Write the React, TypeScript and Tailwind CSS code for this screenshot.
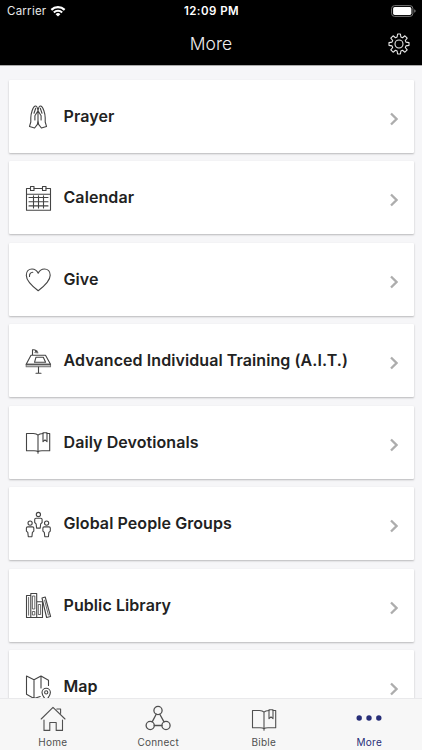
import type { ReactNode } from "react";

function Icon({ children, className = "" }: { children: ReactNode; className?: string }) {
  return (
    <svg viewBox="0 0 30 30" className={`h-[30px] w-[30px] shrink-0 ${className}`} fill="none" stroke="currentColor" strokeWidth="1.1" strokeLinejoin="round" strokeLinecap="round">
      {children}
    </svg>
  );
}

const Prayer = () => (
  <Icon>
    <path transform="translate(0 1)" d="M15 8.8C14.6 6 13.7 3.8 12.2 4C9.8 4.8 7.8 11.8 7.8 15.8V20L6.5 24.4L11.6 26L14.4 22.3L15 18.5V8.8L11.9 13.8V18M15 8.8C15.4 6 16.3 3.8 17.8 4C20.2 4.8 22.2 11.8 22.2 15.8V20L23.5 24.4L18.4 26L15.6 22.3L15 18.5M15 8.8L18.1 13.8V18M12.7 6.3L11 11.2M17.3 6.3L19 11.2" />
  </Icon>
);
const CalendarIcon = () => (
  <Icon>
    <path d="M7 5.5H3.5V27.3H27.5V5.5H23M11 5.5H19M3.5 11.2H27.5M6 14.5H25M6 18.7H25M6 22.9H25M10.5 12.8V25M15.5 12.8V25M20.5 12.8V25" />
    <path d="M7.5 3.5H11V7.5H7.5ZM19.5 3.5H23V7.5H19.5Z" />
  </Icon>
);
const Heart = () => (
  <Icon>
    <path d="M15.2 26.7C11 23.5 3.3 17.4 3.3 11.2C3.3 7.5 5.7 5 9 5C11.8 5 14 6.7 15.2 9.2C16.4 6.7 18.6 5 21.4 5C24.8 5 27.2 7.5 27.2 11.2C27.2 17.4 19.4 23.5 15.2 26.7Z" />
    <path d="M6.5 12.5C6.3 9.8 7.7 8.3 9.8 8.2" />
  </Icon>
);
const Podium = () => (
  <Icon>
    <path d="M3.2 18.2H27.5V20.8H3.2Z" fill="#bbb" stroke="#777" />
    <path d="M8 9.3H22.5L27.5 18.2H3.2ZM9.5 9V3.8Q12.8 3.4 13 5.5M15.5 21V27.3M13 27.3H18" />
    <path d="M11.8 6.3L13.8 4.3L15 6.8Z" fill="currentColor" strokeWidth=".5" />
    <path d="M13 11.2H20.3L22.6 16.3H11.5Z" />
  </Icon>
);
const Book = () => (
  <Icon>
    <g transform="translate(0 1.2)">
      <path d="M15 7C13.8 5.6 12.5 5.3 10.5 5.3H3.5V22.5H11C13 22.5 14.2 22.5 15 23.7C15.8 22.5 17 22.5 19 22.5H26.7V5.3H24M15 7C16.2 5.6 17.5 5.3 20 5.3M15 7V25" />
      <path d="M20 4.5H24V13.5L22 11.6L20 13.5Z" />
    </g>
  </Icon>
);
function Person({ x, y }: { x: number; y: number }) {
  return (
    <g transform={`translate(${x} ${y})`}>
      <circle cx="0" cy="0" r="2.1" />
      <path d="M-2.4 3.8H2.4Q3.7 3.8 3.7 5V8L2.3 9.3L1.8 13.6H-1.8L-2.3 9.3L-3.7 8V5Q-3.7 3.8-2.4 3.8Z" />
    </g>
  );
}
const People = () => (
  <Icon>
    <Person x={15.4} y={5.5} />
    <Person x={7.1} y={14.1} />
    <Person x={23.6} y={14.1} />
  </Icon>
);
const Library = () => (
  <Icon>
    <path d="M3.5 5.5H7.8V27.5H3.5ZM7.8 3.5H13.7V27.5H7.8ZM13.7 11.8H19.5V27.5H13.7ZM19 8L22.2 7L27.6 26.5L23.6 27.5Z" />
    <path d="M5.6 7.5V25.2M9.8 6H11.8V19H9.8ZM9.8 21.5H11.8V25H9.8ZM15.7 14.5H17.6V24.5H15.7ZM21.6 10.2L25.4 25" strokeWidth=".8" />
  </Icon>
);
const MapIcon = () => (
  <Icon>
    <path d="M17.2 24.5L11 26.5L3.5 22.3V4L11 7.8L18 4L25.5 8.3V13.5M11 7.8V26.3M18 4V16" />
    <path d="M23.2 28.4C21.3 25.7 19 23.6 19 20.5A4.2 4.2 0 0 1 27.4 20.5C27.4 23.6 25.1 25.7 23.2 28.4Z" />
    <circle cx="23.2" cy="20.4" r="1.6" />
  </Icon>
);
const House = () => (
  <Icon>
    <path d="M3.2 15L15 3.3L27 15M6 16V26.4H11.8V18.5H18.2V26.4H24.5V16M18.8 5H22.6V9.3" />
  </Icon>
);
const Connect = () => (
  <Icon className="[stroke-width:1.3]">
    <circle cx="15" cy="6.5" r="4.1" />
    <circle cx="7.2" cy="21.5" r="4.1" />
    <circle cx="23" cy="21.5" r="4.1" />
    <path d="M13.2 10.2L9.2 17.9M16.8 10.2L21 17.9M11.3 21.5H18.9" />
  </Icon>
);
const Dots = () => (
  <Icon>
    <g fill="currentColor" stroke="none">
      <circle cx="5.2" cy="14" r="2.7" />
      <circle cx="15" cy="14" r="2.7" />
      <circle cx="24.8" cy="14" r="2.7" />
    </g>
  </Icon>
);

const items = [
  { label: "Prayer", icon: <Prayer /> },
  { label: "Calendar", icon: <CalendarIcon /> },
  { label: "Give", icon: <Heart /> },
  { label: "Advanced Individual Training (A.I.T.)", icon: <Podium /> },
  { label: "Daily Devotionals", icon: <Book /> },
  { label: "Global People Groups", icon: <People /> },
  { label: "Public Library", icon: <Library /> },
  { label: "Map", icon: <MapIcon /> },
];

const tabs = [
  { label: "Home", icon: <House /> },
  { label: "Connect", icon: <Connect /> },
  { label: "Bible", icon: <Book /> },
  { label: "More", icon: <Dots />, active: true },
];

export default function App() {
  return (
    <div className="flex h-[750px] w-[422px] flex-col overflow-hidden bg-[#f6f6f8] font-['Inter','Liberation_Sans',sans-serif]">
      <header className="h-[65px] shrink-0 bg-black text-white">
        <div className="grid h-[22px] grid-cols-3 items-center pr-[6px] pl-[7px]">
          <div className="flex items-center gap-1">
            <span className="text-[11.5px] leading-[22px] tracking-[0.25px] text-[#e8e8e8]">Carrier</span>
            <svg viewBox="0 0 16 12" className="h-3 w-4" fill="white">
              <path d="M.6 4.1a10.6 10.6 0 0 1 14.8 0L13.9 5.7a8.4 8.4 0 0 0-11.8 0Z" />
              <path d="M3.1 6.7a7 7 0 0 1 9.8 0l-1.5 1.5a4.9 4.9 0 0 0-6.8 0Z" />
              <path d="M5.6 9.2a3.5 3.5 0 0 1 4.8 0L8 11.6Z" />
            </svg>
          </div>
          <span className="text-center text-[11.5px] leading-[22px] font-semibold tracking-[0.45px]">12:09 PM</span>
          <svg viewBox="0 0 25 12" className="h-3 w-[25px] justify-self-end">
            <rect x=".6" y=".6" width="21.3" height="10.8" rx="3" fill="none" stroke="#777" />
            <rect x="2.1" y="2.1" width="18.3" height="7.8" rx="1.6" fill="white" />
            <path d="M23.2 4.2Q24.7 4.7 24.7 6T23.2 7.8Z" fill="#777" />
          </svg>
        </div>
        <div className="grid h-[43px] grid-cols-[1fr_auto_1fr] items-center px-3">
          <h1 className="col-start-2 text-[17.5px] leading-[43px] font-light text-[#eee]">More</h1>
          <svg viewBox="0 0 22 22" className="h-[22px] w-[22px] justify-self-end" fill="none" stroke="#e8e8e8" strokeWidth="1.1" strokeLinejoin="round">
            <path d="M9.6 1h2.8l.5 3 1.6.7 2.4-1.9 2.3 2.3-1.9 2.4.7 1.6 3 .5v2.8l-3 .5-.7 1.6 1.9 2.4-2.3 2.3-2.4-1.9-1.6.7-.5 3H9.6l-.5-3-1.6-.7-2.4 1.9-2.3-2.3 1.9-2.4-.7-1.6-3-.5V9.6l3-.5.7-1.6-1.9-2.4 2.3-2.3 2.4 1.9L9.1 4Z" />
            <circle cx="11" cy="11" r="4" />
          </svg>
        </div>
      </header>
      <main className="min-h-0 flex-1 overflow-hidden border-t border-[#aaa] px-[8.5px] pt-[13.8px]">
        <div className="flex flex-col gap-[8.5px]">
          {items.map((item) => (
            <div key={item.label} className="flex h-[73px] shrink-0 items-center rounded-[1px] bg-white pr-[15.5px] pl-[14.5px] text-[#444] shadow-[0_1px_2px_rgba(0,0,0,0.25)]">
              {item.icon}
              <span className="ml-[10.5px] flex-1 text-[16px] leading-[73px] font-semibold tracking-[0.08px] text-[#222]">{item.label}</span>
              <svg viewBox="0 0 8 14" className="mt-[5px] h-[14px] w-2" fill="none" stroke="#adadad" strokeWidth="2.3">
                <path d="M1 1.5L6.5 7L1 12.5" />
              </svg>
            </div>
          ))}
        </div>
      </main>
      <nav className="flex h-[52px] shrink-0 border-t border-[#e9e9eb] bg-[#f7f7f7]">
        {tabs.map((tab) => (
          <div key={tab.label} className={`flex flex-1 flex-col items-center pt-[5px] ${tab.active ? "text-[#272e78]" : "text-[#505050]"}`}>
            {tab.icon}
            <span className="text-[10px] leading-[16px] tracking-[0.25px]">{tab.label}</span>
          </div>
        ))}
      </nav>
    </div>
  );
}
